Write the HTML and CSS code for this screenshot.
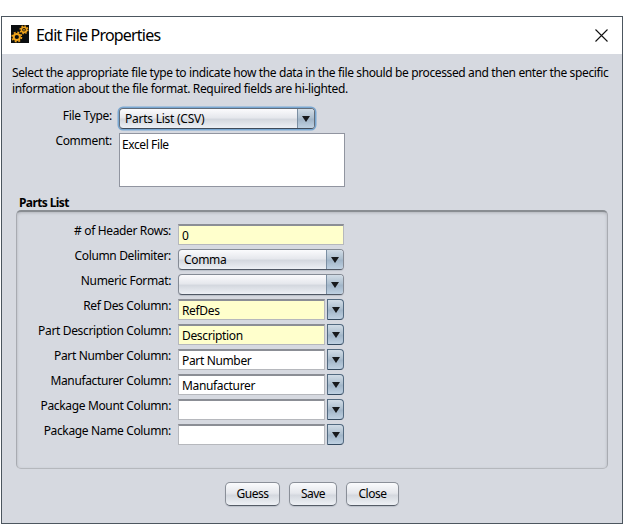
FILE: index.html
```html
<!DOCTYPE html>
<html lang="en">
<head>
<meta charset="utf-8">
<title>Edit File Properties</title>
<link rel="stylesheet" href="styles.css">
</head>
<body>
<main class="window">
  <header class="titlebar">
    <svg class="logo" width="18" height="18" viewBox="0 0 18 18">
      <rect width="18" height="18" fill="#0b0e10"/>
      <g fill="none" stroke="#f0a41c">
        <circle cx="5.8" cy="12" r="3.1" stroke-width="2"/>
        <circle cx="5.8" cy="12" r="4.7" stroke-width="1.6" stroke-dasharray="1.9 1.791"/>
        <circle cx="13" cy="4.8" r="2.6" stroke-width="1.6"/>
        <circle cx="13" cy="4.8" r="3.9" stroke-width="1.3" stroke-dasharray="1.5 1.563"/>
      </g>
      <circle cx="13" cy="4.8" r=".9" fill="#f0a41c"/>
    </svg>
    <h1 class="title">Edit File Properties</h1>
    <svg class="close" width="13" height="13" viewBox="0 0 13 13"><path d="M.5.5l12 12M12.5.5l-12 12" stroke="#111" stroke-width="1.1"/></svg>
  </header>
  <section class="intro">
    <p class="line1">Select the appropriate file type to indicate how the data in the file should be processed and then enter the specific</p>
    <p class="line2">information about the file format. Required fields are hi-lighted.</p>
  </section>
  <section class="top-form">
    <span class="label">File Type:</span>
    <div class="combo focused"><span class="value csv">Parts List (CSV)</span><i class="arrow"></i></div>
    <span class="label comment">Comment:</span>
    <div class="textarea"><span class="excel">Excel File</span></div>
  </section>
  <h2 class="group-title">Parts List</h2>
  <section class="group">
    <span class="label l1"># of Header Rows:</span><div class="field required wide">0</div>
    <span class="label l2">Column Delimiter:</span><div class="combo"><span class="value">Comma</span><i class="arrow"></i></div>
    <span class="label l3">Numeric Format:</span><div class="combo"><span class="value"></span><i class="arrow"></i></div>
    <span class="label l4">Ref Des Column:</span><div class="editable"><div class="field required">RefDes</div><i class="arrow"></i></div>
    <span class="label l5">Part Description Column:</span><div class="editable"><div class="field required">Description</div><i class="arrow"></i></div>
    <span class="label l6">Part Number Column:</span><div class="editable"><div class="field">Part Number</div><i class="arrow"></i></div>
    <span class="label l7">Manufacturer Column:</span><div class="editable"><div class="field">Manufacturer</div><i class="arrow"></i></div>
    <span class="label l8">Package Mount Column:</span><div class="editable"><div class="field"></div><i class="arrow"></i></div>
    <span class="label l9">Package Name Column:</span><div class="editable"><div class="field"></div><i class="arrow"></i></div>
  </section>
  <footer class="actions">
    <button class="guess">Guess</button>
    <button class="save">Save</button>
    <button class="shut">Close</button>
  </footer>
</main>
</body>
</html>
```

FILE: styles.css
```css
* { box-sizing: border-box; }
body {
  margin: 0;
  padding: 16px 0 0 1px;
  height: 525px;
  overflow: hidden;
  background: #fff;
  color: #000;
  font: 12px/16px "Noto Sans", "Open Sans", sans-serif;
  letter-spacing: -0.35px;
  white-space: nowrap;
}
h1, h2, p { margin: 0; }
.window {
  width: 622px;
  height: 508px;
  border: 1px solid #4c565f;
  background: #d6d9e0;
}
.titlebar {
  display: flex;
  align-items: center;
  height: 37px;
  padding: 0 14px 0 9px;
  background: #fff;
}
.logo { margin-top: -3px; }
.title {
  margin: -2px 0 0 7px;
  font-size: 16px;
  line-height: 20px;
  font-weight: 400;
  letter-spacing: -0.8px;
}
.close { margin-left: auto; margin-top: -1px; }
.intro { padding: 11px 0 0 10px; }
.line1 { letter-spacing: -0.377px; }
.top-form {
  display: grid;
  grid-template-columns: 110px 226px;
  column-gap: 7px;
  grid-template-rows: 25px 54px;
  margin-top: 11px;
}
.label { text-align: right; }
.top-form .label { letter-spacing: -0.3px; }
.csv { letter-spacing: -0.25px; }
.combo {
  position: relative;
  display: flex;
  width: 166px;
  height: 21px;
  border: 1px solid #858b95;
  border-bottom-color: #505865;
  border-radius: 4px;
  background: linear-gradient(#fbfbfd, #e6e8ed 45%, #d4d8df 55%, #edf0f5);
  box-shadow: 0 1px 1px #bbc0c9;
}
.focused {
  width: 196px;
  border-color: #626d7a;
  border-bottom-color: #3f4b5a;
  box-shadow: 0 0 0 1.5px #78a7d2;
}
.value { flex: 1; padding: 2px 0 0 5px; }
.arrow {
  display: flex;
  align-items: center;
  justify-content: center;
  width: 17px;
  border-left: 1px solid #7b8fa3;
  border-radius: 0 3px 3px 0;
  background: linear-gradient(#d1dce6, #adbfcf 46%, #a1b5c8 54%, #bfd1e2);
}
.arrow::after {
  content: "";
  border: 4px solid transparent;
  border-top: 6px solid #17191c;
  border-bottom: 0;
}
.textarea {
  height: 54px;
  padding: 3px 2px;
  border: 1px solid #9195a0;
  background: #fff;
}
.excel { letter-spacing: -0.4px; }
.group-title {
  height: 16px;
  margin: 8px 0 0 17px;
  font-size: 12px;
  line-height: 16px;
  letter-spacing: -0.6px;
}
.group {
  display: grid;
  grid-template-columns: 154px 166px;
  grid-auto-rows: 25px;
  column-gap: 7px;
  width: 592px;
  height: 259px;
  margin: -1px 0 0 14px;
  padding-top: 13px;
  border: 1px solid #a8abb1;
  border-top: 2px solid #898d92;
  border-bottom-color: #b5b8bd;
  border-radius: 5px;
  padding-top: 12px;
  box-shadow: inset 0 1px 3px #b2b5bb;
}
.group .label { margin-top: -1px; }
.field {
  width: 147px;
  height: 21px;
  padding: 2px 0 0 3px;
  border: 1px solid #b6b8bd;
  border-top: 2px solid #8b8e95;
  background: #fff;
  line-height: 15px;
}
.required { background: #ffffcc; }
.wide { width: 166px; }
.editable { display: flex; gap: 2px; height: 21px; }
.editable .arrow {
  border: 1px solid #536a80;
  border-bottom-color: #344a60;
  border-radius: 0 4px 4px 0;
}
.actions {
  display: flex;
  gap: 9px;
  margin: 13px 0 0 223px;
}
button {
  height: 24px;
  padding: 0 0 1px;
  border: 1px solid #8a8f98;
  border-bottom-color: #555c67;
  border-radius: 5px;
  background: linear-gradient(#fafbfd, #e5e7ec 46%, #d4d8df 56%, #eef1f5);
  box-shadow: 0 1px 1px #bbc0c9;
  color: #000;
  font: inherit;
  line-height: 20px;
  padding-top: 1px;
  letter-spacing: -0.5px;
}
.guess { width: 55px; }
.save { width: 48px; }
.shut { width: 53px; }
```
